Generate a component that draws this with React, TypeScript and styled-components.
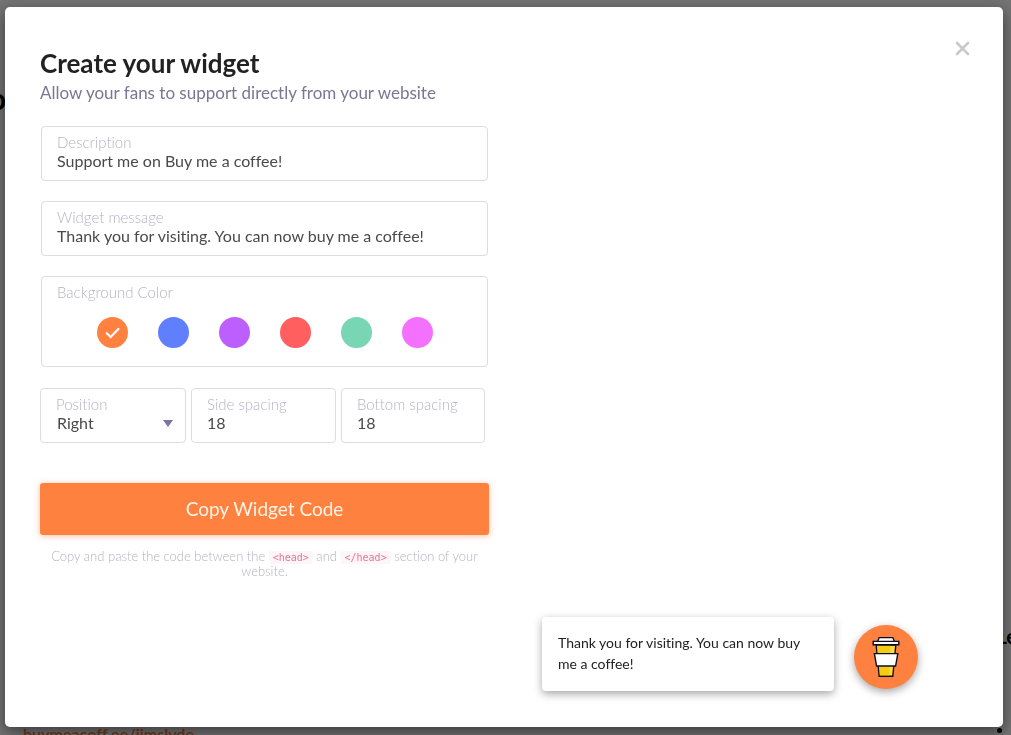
import React, { useState } from "react";
import styled, { createGlobalStyle } from "styled-components";

const GlobalStyle = createGlobalStyle`
  *, *::before, *::after { box-sizing: border-box; }
  body {
    margin: 0;
    font-family: Lato, "Open Sans", sans-serif;
    font-variant-ligatures: none;
    color: #222222;
    background: #ffffff;
  }
  button, input, select { font-family: inherit; font-variant-ligatures: none; }
`;

const Page = styled.div`
  height: 100vh;
  overflow: hidden;
  display: flex;
  flex-direction: column;
  justify-content: space-between;
`;

const PageTitle = styled.h1`
  margin: 80px 0 0 -11px;
  font-size: 30px;
  line-height: 36px;
  font-weight: 700;
  color: #000000;
`;

const PageFooter = styled.div`
  display: flex;
  flex-direction: column;
  gap: 76px;
  margin-bottom: -9px;
`;

const PageAction = styled.span`
  align-self: flex-end;
  margin-right: -6px;
  font-size: 20px;
  line-height: 24px;
  font-weight: 700;
  color: #000000;
`;

const PageRow = styled.div`
  display: flex;
  justify-content: space-between;
  padding: 0 9px 0 23px;
`;

const PageLink = styled.a`
  font-size: 16px;
  line-height: 20px;
  font-weight: 700;
  color: #ff813f;
  text-decoration: none;
`;

const MoreDot = styled.span`
  width: 5px;
  height: 5px;
  margin-top: 4px;
  border-radius: 50%;
  background: #000000;
`;

const Overlay = styled.div`
  position: fixed;
  inset: 0;
  display: flex;
  padding: 7px 8px 8px 5px;
  background: rgba(0, 0, 0, 0.55);
`;

const Dialog = styled.main`
  flex: 1;
  display: grid;
  grid-template-columns: minmax(0, 449px) minmax(0, 1fr);
  padding: 0 0 0 35px;
  border-radius: 5px;
  background: #ffffff;
  box-shadow: 0 5px 15px rgba(0, 0, 0, 0.5);
`;

const Form = styled.form`
  display: flex;
  flex-direction: column;
  padding-top: 41px;
`;

const Title = styled.h2`
  margin: 0;
  font-size: 26px;
  line-height: 30px;
  font-weight: 700;
`;

const Subtitle = styled.p`
  margin: 5px 0 23px;
  font-size: 17px;
  line-height: 20px;
  color: #7a7693;
`;

const Stack = styled.div`
  display: flex;
  flex-direction: column;
  gap: 20px;
  padding: 0 1px;
`;

const Field = styled.label`
  display: flex;
  flex-direction: column;
  min-width: 0;
  height: 55px;
  padding: 6px 15px;
  border: 1px solid #dcdce1;
  border-radius: 4px;
`;

const Caption = styled.span`
  font-size: 15px;
  line-height: 18px;
  font-weight: 300;
  color: #b5b3c4;
`;

const TextInput = styled.input`
  width: 100%;
  height: 20px;
  padding: 0;
  border: 0;
  outline: 0;
  font-size: 16px;
  line-height: 20px;
  color: #4a4a4a;
  background: transparent;
`;

const SelectWrap = styled.span`
  display: flex;
  align-items: center;
  margin-right: -3px;
`;

const Select = styled.select`
  flex: 1;
  min-width: 0;
  height: 20px;
  padding: 0 0 0 1px;
  border: 0;
  outline: 0;
  appearance: none;
  font-size: 16px;
  line-height: 20px;
  color: #4a4a4a;
  background: transparent;
`;

const Caret = styled.span`
  border: 5px solid transparent;
  border-top: 7px solid #7a75a0;
  border-bottom: 0;
`;

const ColorField = styled.fieldset`
  display: flex;
  flex-direction: column;
  gap: 16px;
  height: 91px;
  margin: 0;
  padding: 6px 15px;
  border: 1px solid #dcdce1;
  border-radius: 4px;
`;

const Swatches = styled.div`
  display: flex;
  justify-content: center;
  gap: 30px;
`;

const Swatch = styled.label<{ $color: string }>`
  display: grid;
  place-items: center;
  width: 31px;
  height: 31px;
  border-radius: 50%;
  background: ${(p) => p.$color};
  cursor: pointer;
  > * { grid-area: 1 / 1; }
`;

const SwatchInput = styled.input`
  width: 31px;
  height: 31px;
  margin: 0;
  appearance: none;
  border-radius: 50%;
`;

const Row = styled.div`
  display: grid;
  grid-template-columns: 146fr 145fr 144fr;
  gap: 5px;
  margin-top: 21px;
  padding-right: 4px;
`;

const CopyButton = styled.button`
  height: 52px;
  margin-top: 40px;
  padding: 0 0 2px;
  border: 0;
  border-radius: 3px;
  font-size: 19px;
  font-weight: 400;
  color: #fff4e8;
  background: #ff813f;
  box-shadow: 0 1px 6px rgba(255, 129, 63, 0.5);
  cursor: pointer;
`;

const Hint = styled.p`
  margin: 14px 6px 0;
  font-size: 13px;
  line-height: 14px;
  font-weight: 300;
  text-align: center;
  color: #b5b3c4;
`;

const Code = styled.code`
  padding: 1px 4px;
  border-radius: 3px;
  font-family: "DejaVu Sans Mono", monospace;
  font-size: 10px;
  line-height: 12px;
  font-weight: 400;
  color: #e0789c;
  background: #fdf5f7;
`;

const Preview = styled.section`
  display: flex;
  flex-direction: column;
  justify-content: space-between;
  align-items: flex-end;
  padding: 31px 30px 36px 0;
`;

const CloseButton = styled.button`
  display: grid;
  place-items: center;
  width: 21px;
  height: 21px;
  padding: 0;
  border: 0;
  background: transparent;
  cursor: pointer;
`;

const Widget = styled.div`
  display: flex;
  align-items: center;
  gap: 20px;
  margin-right: 55px;
`;

const Bubble = styled.p`
  width: 292px;
  margin: 0;
  padding: 15px 16px 17px;
  border-radius: 4px;
  font-size: 14px;
  line-height: 21px;
  color: #222222;
  background: #ffffff;
  box-shadow: 0 3px 8px rgba(0, 0, 0, 0.35);
`;

const CoffeeButton = styled.button`
  display: grid;
  place-items: center;
  width: 64px;
  height: 64px;
  margin-top: 6px;
  padding: 0;
  border: 0;
  border-radius: 50%;
  background: #ff813f;
  box-shadow: 0 3px 8px rgba(0, 0, 0, 0.35);
  cursor: pointer;
`;

const colors = [
  { name: "Orange", value: "#ff813f" },
  { name: "Blue", value: "#5f7fff" },
  { name: "Purple", value: "#bd5fff" },
  { name: "Red", value: "#ff5f5f" },
  { name: "Green", value: "#79d6b5" },
  { name: "Pink", value: "#f471ff" },
];

function CheckMark() {
  return (
    <svg width="15" height="12" viewBox="0 0 15 12" fill="none" aria-hidden="true">
      <path d="M1.8 6.2 5.6 10 13.4 2" stroke="#fff" strokeWidth="2.2" strokeLinecap="round" />
    </svg>
  );
}

function CoffeeCup() {
  return (
    <svg width="28" height="42" viewBox="0 0 28 42" aria-hidden="true" stroke="#0d0c23" strokeWidth="1.4">
      <path d="M4.2 9 7.2 40.3h13.6L23.8 9Z" fill="#ffdd33" />
      <path d="M5 9.5 7.9 39.6h9.2L18.6 9.5Z" fill="#f0c000" stroke="none" opacity="0.6" />
      <path d="M7.2 1.6h13.6L22.4 5.6H5.6Z" fill="#fff" />
      <path d="M1.2 5.4h25.6v3.4H1.2Z" fill="#fff" />
      <path d="M2.4 17.6h23.4L23.6 30H4.6Z" fill="#fff" />
    </svg>
  );
}

export default function App() {
  const [description, setDescription] = useState("Support me on Buy me a coffee!");
  const [message, setMessage] = useState("Thank you for visiting. You can now buy me a coffee!");
  const [color, setColor] = useState(colors[0].value);
  const [position, setPosition] = useState("Right");
  const [side, setSide] = useState("18");
  const [bottom, setBottom] = useState("18");

  return (
    <>
      <GlobalStyle />
      <Page aria-hidden="true">
        <PageTitle>o</PageTitle>
        <PageFooter>
          <PageAction>Le</PageAction>
          <PageRow>
            <PageLink href="#profile" tabIndex={-1}>buymeacoff.ee/jimslyde</PageLink>
            <MoreDot />
          </PageRow>
        </PageFooter>
      </Page>
      <Overlay>
        <Dialog role="dialog" aria-labelledby="widget-title">
          <Form onSubmit={(e) => e.preventDefault()}>
            <Title id="widget-title">Create your widget</Title>
            <Subtitle>Allow your fans to support directly from your website</Subtitle>
            <Stack>
              <Field>
                <Caption>Description</Caption>
                <TextInput value={description} onChange={(e) => setDescription(e.target.value)} />
              </Field>
              <Field>
                <Caption>Widget message</Caption>
                <TextInput value={message} onChange={(e) => setMessage(e.target.value)} />
              </Field>
              <ColorField aria-labelledby="color-caption">
                <Caption id="color-caption">Background Color</Caption>
                <Swatches>
                  {colors.map((c) => (
                    <Swatch key={c.value} $color={c.value}>
                      <SwatchInput
                        type="radio"
                        name="color"
                        aria-label={c.name}
                        checked={color === c.value}
                        onChange={() => setColor(c.value)}
                      />
                      {color === c.value && <CheckMark />}
                    </Swatch>
                  ))}
                </Swatches>
              </ColorField>
            </Stack>
            <Row>
              <Field>
                <Caption>Position</Caption>
                <SelectWrap>
                  <Select value={position} onChange={(e) => setPosition(e.target.value)}>
                    <option>Right</option>
                    <option>Left</option>
                  </Select>
                  <Caret />
                </SelectWrap>
              </Field>
              <Field>
                <Caption>Side spacing</Caption>
                <TextInput value={side} onChange={(e) => setSide(e.target.value)} />
              </Field>
              <Field>
                <Caption>Bottom spacing</Caption>
                <TextInput value={bottom} onChange={(e) => setBottom(e.target.value)} />
              </Field>
            </Row>
            <CopyButton type="submit">Copy Widget Code</CopyButton>
            <Hint>
              Copy and paste the code between the <Code>&lt;head&gt;</Code> and <Code>&lt;/head&gt;</Code> section of your website.
            </Hint>
          </Form>
          <Preview>
            <CloseButton type="button" aria-label="Close">
              <svg width="15" height="15" viewBox="0 0 15 15" aria-hidden="true">
                <path d="M2 2 13 13M13 2 2 13" stroke="#c9c9c9" strokeWidth="2.6" strokeLinecap="round" />
              </svg>
            </CloseButton>
            <Widget>
              <Bubble>{message}</Bubble>
              <CoffeeButton type="button" aria-label="Buy me a coffee">
                <CoffeeCup />
              </CoffeeButton>
            </Widget>
          </Preview>
        </Dialog>
      </Overlay>
    </>
  );
}
